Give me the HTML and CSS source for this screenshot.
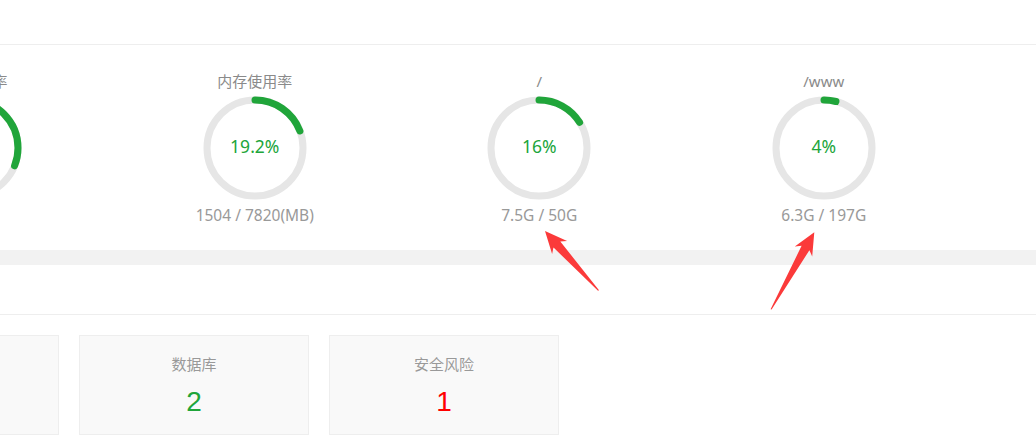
FILE: index.html
```html
<!DOCTYPE html>
<html lang="zh-CN">
<head>
<meta charset="utf-8">
<title>状态</title>
<link rel="stylesheet" href="styles.css">
</head>
<body>
<div class="page">
  <section class="panel">
    <div class="panel-head"></div>
    <div class="gauges">
      <div class="gauge">
        <div class="g-title">CPU使用率</div>
        <div class="g-ring">
          <svg viewBox="0 0 104 104" width="104" height="104"><circle class="track" cx="52" cy="52" r="48"/><circle class="bar" cx="52" cy="52" r="48" stroke-dasharray="93.5 301.6" transform="rotate(-90 52 52)"/></svg>
          <span class="g-val">31%</span>
        </div>
        <div class="g-sub">2 核心</div>
      </div>
      <div class="gauge">
        <div class="g-title">内存使用率</div>
        <div class="g-ring">
          <svg viewBox="0 0 104 104" width="104" height="104"><circle class="track" cx="52" cy="52" r="48"/><circle class="bar" cx="52" cy="52" r="48" stroke-dasharray="57.9 301.6" transform="rotate(-90 52 52)"/></svg>
          <span class="g-val">19.2%</span>
        </div>
        <div class="g-sub">1504 / 7820(MB)</div>
      </div>
      <div class="gauge">
        <div class="g-title">/</div>
        <div class="g-ring">
          <svg viewBox="0 0 104 104" width="104" height="104"><circle class="track" cx="52" cy="52" r="48"/><circle class="bar" cx="52" cy="52" r="48" stroke-dasharray="48.3 301.6" transform="rotate(-90 52 52)"/></svg>
          <span class="g-val">16%</span>
        </div>
        <div class="g-sub">7.5G / 50G</div>
      </div>
      <div class="gauge">
        <div class="g-title">/www</div>
        <div class="g-ring">
          <svg viewBox="0 0 104 104" width="104" height="104"><circle class="track" cx="52" cy="52" r="48"/><circle class="bar" cx="52" cy="52" r="48" stroke-dasharray="12.1 301.6" transform="rotate(-90 52 52)"/></svg>
          <span class="g-val">4%</span>
        </div>
        <div class="g-sub">6.3G / 197G</div>
      </div>
    </div>
  </section>

  <section class="panel">
    <div class="panel-head tall"></div>
    <div class="cards">
      <div class="card">
        <div class="c-label">FTP</div>
        <div class="c-num green">0</div>
      </div>
      <div class="card">
        <div class="c-label">数据库</div>
        <div class="c-num green">2</div>
      </div>
      <div class="card">
        <div class="c-label">安全风险</div>
        <div class="c-num red">1</div>
      </div>
    </div>
  </section>

  <svg class="annot" viewBox="0 0 1036 443" width="1036" height="443">
    <polygon class="arrow" points="545,231 567.1,240.9 560.3,241.5 599,290.2 598,290.8 553.5,247.5 552.1,254.1"/>
    <polygon class="arrow" points="814.3,232.3 812.2,256.4 809.4,250.2 771.6,309.6 770.6,309.2 801.6,245.8 794.8,246.6"/>
  </svg>
</div>
</body>
</html>
```

FILE: styles.css
```css
html, body {
  margin: 0;
  padding: 0;
}

body {
  background: #f2f2f2;
  font-family: "Noto Sans", "Noto Sans CJK SC", sans-serif;
  overflow: hidden;
}

.page {
  position: relative;
  width: 1036px;
  height: 443px;
  overflow: hidden;
}

.panel {
  background: #fff;
}

.panel + .panel {
  margin-top: 15px;
}

.panel-head {
  height: 44px;
  border-bottom: 1px solid #eeeeee;
}

.panel-head.tall {
  height: 49px;
}

.gauges {
  display: flex;
  margin-left: -172px;
  padding: 26px 0 25px;
}

.gauge {
  flex: 0 0 284.5px;
  display: flex;
  flex-direction: column;
  align-items: center;
}

.g-title {
  font-size: 15px;
  line-height: 20px;
  color: #8a8a8a;
  white-space: nowrap;
}

.g-ring {
  position: relative;
  width: 104px;
  height: 104px;
  margin-top: 5px;
}

.g-ring svg {
  display: block;
}

.track {
  fill: none;
  stroke: #e6e6e6;
  stroke-width: 7;
}

.bar {
  fill: none;
  stroke: #20a53a;
  stroke-width: 7;
  stroke-linecap: round;
}

.g-val {
  position: absolute;
  inset: 0 0 4px 0;
  display: flex;
  align-items: center;
  justify-content: center;
  font-size: 17.5px;
  color: #20a53a;
}

.g-sub {
  margin-top: 5px;
  font-size: 15.5px;
  line-height: 20px;
  color: #999;
  white-space: nowrap;
}

.cards {
  display: flex;
  gap: 20px;
  margin-left: -171px;
  padding: 20px 0;
}

.card {
  flex: 0 0 230px;
  height: 100px;
  box-sizing: border-box;
  border: 1px solid #eeeeee;
  background: #f9f9f9;
  text-align: center;
  padding-top: 18px;
}

.c-label {
  font-size: 15px;
  line-height: 20px;
  color: #999;
}

.c-num {
  margin-top: 11px;
  font-family: "Liberation Sans", Arial, sans-serif;
  font-size: 28px;
  line-height: 34px;
}

.c-num.green {
  color: #20a53a;
}

.c-num.red {
  color: #ff0000;
}

.annot {
  position: absolute;
  left: 0;
  top: 0;
  pointer-events: none;
}

.arrow {
  fill: #fb3a3a;
}
```
